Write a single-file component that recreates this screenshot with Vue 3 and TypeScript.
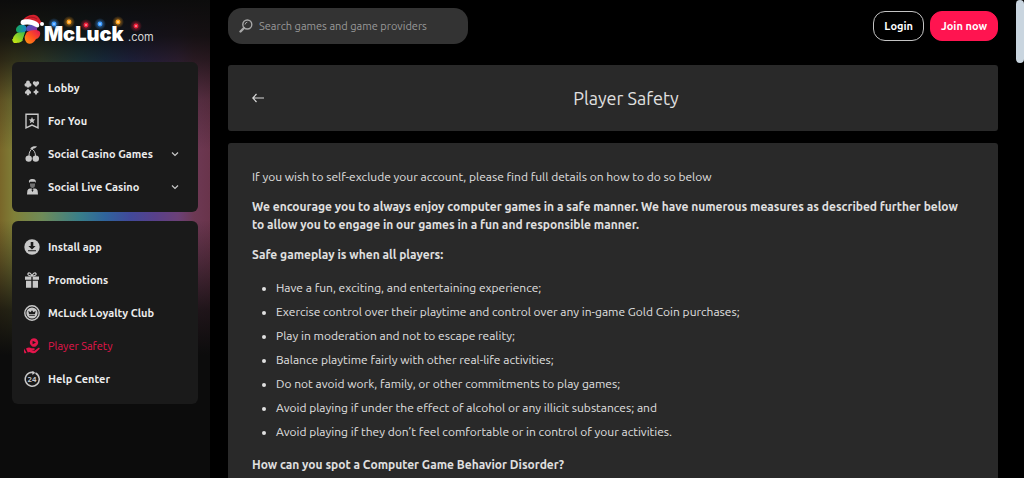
<script setup lang="ts">
import { ref } from 'vue'

interface NavItem {
  label: string
  icon: string
  expandable?: boolean
  active?: boolean
}

const groups: NavItem[][] = [
  [
    { label: 'Lobby', icon: 'suits' },
    { label: 'For You', icon: 'bookmark' },
    { label: 'Social Casino Games', icon: 'cherry', expandable: true },
    { label: 'Social Live Casino', icon: 'dealer', expandable: true },
  ],
  [
    { label: 'Install app', icon: 'install' },
    { label: 'Promotions', icon: 'gift' },
    { label: 'McLuck Loyalty Club', icon: 'loyalty' },
    { label: 'Player Safety', icon: 'safety', active: true },
    { label: 'Help Center', icon: 'help' },
  ],
]

const rules: string[] = [
  'Have a fun, exciting, and entertaining experience;',
  'Exercise control over their playtime and control over any in-game Gold Coin purchases;',
  'Play in moderation and not to escape reality;',
  'Balance playtime fairly with other real-life activities;',
  'Do not avoid work, family, or other commitments to play games;',
  'Avoid playing if under the effect of alcohol or any illicit substances; and',
  'Avoid playing if they don’t feel comfortable or in control of your activities.',
]

const bulbs = [
  { x: 42, y: 10, color: '#3d9bff' },
  { x: 57, y: 8, color: '#ffa31f' },
  { x: 74, y: 11, color: '#f0203c' },
  { x: 88, y: 10, color: '#3d9bff' },
  { x: 106, y: 8, color: '#ffa31f' },
  { x: 124, y: 12, color: '#f0203c' },
]

const query = ref('')
</script>

<template>
  <div class="page">
    <aside class="sidebar">
      <a class="logo" href="#" aria-label="McLuck.com">
        <svg width="144" height="32" viewBox="0 0 144 32">
          <defs>
            <linearGradient id="leafA" x1="0" y1="1" x2="1" y2="0">
              <stop offset="0" stop-color="#d8e80c" /><stop offset="1" stop-color="#35b84a" />
            </linearGradient>
            <linearGradient id="leafB" x1="0" y1="0" x2="1" y2="0">
              <stop offset="0" stop-color="#16a75a" /><stop offset="1" stop-color="#1784c9" />
            </linearGradient>
            <linearGradient id="leafC" x1="0" y1="0" x2="1" y2="1">
              <stop offset="0" stop-color="#3462c8" /><stop offset="1" stop-color="#a22a9a" />
            </linearGradient>
            <linearGradient id="leafD" x1="1" y1="0" x2="0" y2="1">
              <stop offset="0" stop-color="#df1556" /><stop offset="0.5" stop-color="#ff5020" /><stop offset="1" stop-color="#ff9a12" />
            </linearGradient>
            <radialGradient v-for="(b, i) in bulbs" :id="'glow' + i" :key="i">
              <stop offset="0" :stop-color="b.color" stop-opacity="0.7" />
              <stop offset="1" :stop-color="b.color" stop-opacity="0" />
            </radialGradient>
          </defs>
          <path d="M13 18C9 17 4 18 2 22C0 25 1 28 2 29C5 29 9 29 11 26C13 23 14 20 13 18Z" fill="url(#leafA)" />
          <path d="M1 25l1 3" stroke="#aee01a" stroke-width="2" />
          <path d="M14 18C10 18 4 20 4 16C4 12 8 10 12 11C15 12 15 15 14 18Z" fill="url(#leafB)" />
          <path d="M15 17C13 14 15 11 19 11C23 11 26 13 25 16C23 19 18 18 15 17Z" fill="url(#leafC)" />
          <path d="M15 18C19 16 26 15 28 18C29 22 26 25 24 25C22 29 18 31 15 29C12 26 12 22 15 18Z" fill="url(#leafD)" />
          <path d="M14 17l-3 9" stroke="#10140f" stroke-width="1" fill="none" />
          <path d="M10 8C12 3 18 0 23 1C27 2 28 6 30 9L26 11C20 7 16 8 10 8Z" fill="#d4202c" />
          <path d="M14 6C16 3 20 2 25 5" stroke="#a31420" stroke-width="1" fill="none" />
          <path d="M10 6C14 4 25 6 27 10C28 13 26 14 24 13C20 10 14 10 11 11C8 11 8 7 10 6Z" fill="#fff" />
          <circle cx="30" cy="10" r="2" fill="#fff" />
          <text x="32" y="27" class="logo-name">McLuck</text>
          <text x="116" y="27" class="logo-tld">.com</text>
          <g v-for="(b, i) in bulbs" :key="i">
            <circle :cx="b.x" :cy="b.y" r="6" :fill="'url(#glow' + i + ')'" />
            <circle :cx="b.x" :cy="b.y" r="2.4" :fill="b.color" />
            <circle :cx="b.x" :cy="b.y" r="1" fill="#fff" fill-opacity="0.5" />
          </g>
        </svg>
      </a>

      <nav v-for="(items, g) in groups" :key="g" class="card nav">
        <component
          :is="item.expandable ? 'button' : 'a'"
          v-for="item in items"
          :key="item.label"
          class="nav-item"
          :class="{ active: item.active }"
          :href="item.expandable ? undefined : '#'"
          :type="item.expandable ? 'button' : undefined"
        >
          <svg class="nav-icon" width="16" height="16" viewBox="0 0 16 16" fill="currentColor" aria-hidden="true">
            <g v-if="item.icon === 'suits'">
              <circle cx="4" cy="2.5" r="1.9" /><circle cx="2.4" cy="4.8" r="1.9" /><circle cx="5.6" cy="4.8" r="1.9" />
              <path d="M3.5 4h1l.8 3.400H2.7z" />
              <path d="M12 7L9.3 4.2C8.3 3 9 1.300 10.400 1.300C11.300 1.300 11.800 1.800 12 2.300C12.200 1.800 12.700 1.300 13.600 1.300C15 1.300 15.700 3 14.700 4.200Z" />
              <path d="M4 8.800L6.700 11.500C7.800 12.800 6.600 14.400 5 13.700L5.300 15.300H2.700L3 13.700C1.400 14.400.2 12.800 1.300 11.500Z" />
              <path d="M12 8.800Q12.900 11 15 12Q12.900 13 12 15.200Q11.100 13 9 12Q11.100 11 12 8.800Z" />
            </g>
            <g v-else-if="item.icon === 'bookmark'">
              <path d="M2 1.200H14V14.800L8 12L2 14.800Z" fill="none" stroke="currentColor" stroke-width="1.400" />
              <path d="M8 4L9 6.200L11.200 6.400L9.500 7.900L10.100 10.200L8 9L5.900 10.200L6.500 7.900L4.800 6.400L7 6.200Z" />
            </g>
            <g v-else-if="item.icon === 'cherry'">
              <circle cx="4.700" cy="12.600" r="3.200" /><circle cx="11.800" cy="12.600" r="3.200" />
              <path d="M5 10C5 6 6.500 3.500 9 2M11.500 10C11.500 6 9.500 4 8 3" fill="none" stroke="currentColor" />
              <path d="M6 2.800C8 .2 10.500.2 13 .5C11.500 2.500 9 3.300 6 2.800Z" />
            </g>
            <g v-else-if="item.icon === 'dealer'">
              <path d="M5.200 4C4.300 1 6 0 8.500 0C11.300 0 12.300 1.200 11.700 4L11 2.800H6Z" />
              <path d="M6 4.500H11V6C11 8 10 9 8.500 9S6 8 6 6Z" opacity=".5" />
              <path d="M3 15.500L3.400 11.500Q4 9.800 6.500 9.300L8.500 13L10.500 9.300Q13 9.800 13.600 11.500L14 15.500Z" />
              <path d="M7 9.300L8.500 10.200L10 9.300V11L8.500 10.300L7 11Z" />
            </g>
            <g v-else-if="item.icon === 'install'">
              <circle cx="8" cy="8" r="7.700" />
              <path d="M6.700 3H9.300V7H11.600L8 10.600L4.400 7H6.700ZM4 11.200H12V12.300H4Z" fill="#1a1a1a" />
            </g>
            <g v-else-if="item.icon === 'gift'">
              <path d="M1 4.500H7.300V7.700H1ZM8.700 4.500H15V7.700H8.700ZM2 8.700H7.300V15.700H2ZM8.700 8.700H14V15.700H8.700Z" />
              <path d="M8 4.200C6.500 4 3.200 3.400 4 1.600C5-.2 7.500 1.500 8 4.200C8.500 1.500 11-.2 12 1.600C12.800 3.400 9.500 4 8 4.200" fill="none" stroke="currentColor" stroke-width="1.200" />
            </g>
            <g v-else-if="item.icon === 'loyalty'">
              <circle cx="8" cy="8" r="7.200" fill="none" stroke="currentColor" stroke-width="1.400" />
              <circle cx="8" cy="8" r="5.600" />
              <path d="M4.300 5.800L6.500 7.300L8 5.200L9.500 7.300L11.700 5.800L11 9H5ZM5.200 9.800H10.800V10.700H5.200Z" fill="#1a1a1a" />
            </g>
            <g v-else-if="item.icon === 'safety'">
              <path fill-rule="evenodd" d="M10 .3A4.200 4.200 0 1 1 9.990.3ZM8.600 2.700V6.300L12 4.500Z" />
              <path d="M0 10.500L2.500 14.800L.8 15.500L0 14ZM2 10.500Q5 8.500 7.500 10.300H10Q11.300 10.700 10.300 11.900H7.500L10.500 12.700L14.500 9.800Q16.200 9.500 15.500 11L11.500 14.700Q10 15.500 8 15L5.500 14L3.800 14.500Z" />
            </g>
            <g v-else>
              <path d="M11.500 2A7 7 0 1 1 8 1.200L10 1.500" fill="none" stroke="currentColor" stroke-width="1.500" />
              <path d="M8.300 0L11.400 1.800L8.300 4Z" />
              <text x="8" y="11" class="icon-text">24</text>
            </g>
          </svg>
          <span>{{ item.label }}</span>
          <svg v-if="item.expandable" class="chevron" width="8" height="8" viewBox="0 0 8 8" aria-hidden="true">
            <path d="M1 2.500L4 5.500L7 2.500" fill="none" stroke="currentColor" stroke-width="1.200" />
          </svg>
        </component>
      </nav>
    </aside>

    <main class="main">
      <header class="topbar">
        <label class="search">
          <svg width="14" height="14" viewBox="0 0 14 14" fill="none" stroke="currentColor" aria-hidden="true">
            <circle cx="8.300" cy="5.500" r="4.500" stroke-width="1.400" />
            <path d="M5 9L1.500 12.500" stroke-width="2.400" stroke-linecap="round" />
            <path d="M6 5.500Q6.300 3.400 8.300 3.200" />
          </svg>
          <input v-model="query" type="search" aria-label="Search" placeholder="Search games and game providers" />
        </label>
        <div class="actions">
          <button class="btn" type="button">Login</button>
          <button class="btn primary" type="button">Join now</button>
        </div>
      </header>

      <section class="panel title-bar">
        <button class="back" type="button" aria-label="Back">
          <svg width="12" height="10" viewBox="0 0 12 10" fill="none" stroke="currentColor" stroke-width="1.200">
            <path d="M12 5H1M4.500 1L.8 5L4.500 9" />
          </svg>
        </button>
        <h1>Player Safety</h1>
      </section>

      <article class="panel content">
        <p>If you wish to self-exclude your account, please find full details on how to do so below</p>
        <p><strong>We encourage you to always enjoy computer games in a safe manner. We have numerous measures as described further below to allow you to engage in our games in a fun and responsible manner.</strong></p>
        <p><strong>Safe gameplay is when all players:</strong></p>
        <ul>
          <li v-for="rule in rules" :key="rule">{{ rule }}</li>
        </ul>
        <p><strong>How can you spot a Computer Game Behavior Disorder?</strong></p>
      </article>
    </main>
    <div class="scroll-thumb"></div>
  </div>
</template>

<style>
body {
  background: #000;
}
</style>

<style scoped>
* {
  box-sizing: border-box;
}
.page {
  position: relative;
  display: flex;
  height: 100vh;
  overflow: hidden;
  background: #000;
  color: #e0e0e0;
  font-family: Ubuntu, "Noto Sans", "Open Sans", sans-serif;
  font-size: 12px;
}
.sidebar {
  flex: 0 0 210px;
  display: flex;
  flex-direction: column;
  gap: 9px;
  padding: 14px 12px;
  background:
    linear-gradient(180deg, #0c0c0c 0, rgba(12, 12, 12, 0.9) 36px, rgba(12, 12, 12, 0.7) 60px, rgba(12, 12, 12, 0.25) 100px, transparent 150px, transparent 220px, rgba(12, 12, 12, 0.35) 262px, rgba(12, 12, 12, 0.8) 310px, #0c0c0c 355px),
    linear-gradient(90deg, #796629 0, #808038 14px, #6f8b58 42px, #387e8a 80px, #2f649c 105px, #41499a 130px, #58408a 155px, #6b4077 178px, #6d3954 194px, #69344b 210px);
}
.logo {
  height: 39px;
}
.logo svg {
  display: block;
  overflow: visible;
}
.logo-name {
  fill: #fff;
  font-family: Inter, sans-serif;
  font-size: 20px;
  font-weight: 900;
}
.logo-tld {
  fill: #d5d5d5;
  font-family: Inter, sans-serif;
  font-size: 11px;
}
.card {
  padding: 9px 12px;
  border-radius: 6px;
  background: #1a1a1a;
}
.nav-item {
  display: flex;
  align-items: center;
  gap: 8px;
  width: 100%;
  height: 33px;
  padding: 0;
  border: 0;
  background: none;
  color: #ececec;
  font-family: inherit;
  font-size: 11px;
  font-weight: 600;
  text-decoration: none;
  white-space: nowrap;
}
.nav-icon {
  flex: none;
  color: #c8c8c8;
}
.icon-text {
  font-size: 8px;
  font-weight: 700;
  text-anchor: middle;
}
.chevron {
  margin-left: auto;
  margin-right: 7px;
  color: #c8c8c8;
}
.active {
  font-weight: 400;
}
.active,
.active .nav-icon {
  color: #e4154b;
}
.main {
  flex: 1;
  min-width: 0;
  padding: 8px 26px 0 18px;
}
.topbar {
  display: flex;
  justify-content: space-between;
  align-items: center;
  margin-bottom: 21px;
}
.search {
  display: flex;
  align-items: center;
  gap: 6px;
  width: 240px;
  height: 36px;
  padding: 0 11px;
  border-radius: 14px;
  background: #333;
  color: #a8a8a8;
}
.search input {
  flex: 1;
  min-width: 0;
  padding: 0;
  border: 0;
  outline: 0;
  background: none;
  color: #e0e0e0;
  font-family: inherit;
  font-size: 11px;
}
.search input::placeholder {
  color: #999;
}
.actions {
  display: flex;
  gap: 6px;
}
.btn {
  height: 30px;
  padding: 0 10px;
  border: 1px solid #c4c4c4;
  border-radius: 12px;
  background: #000;
  color: #fff;
  font-family: inherit;
  font-size: 11px;
  font-weight: 600;
}
.primary {
  border-color: #ff1450;
  background: #ff1450;
}
.panel {
  border-radius: 3px;
  background: #292929;
}
.title-bar {
  display: grid;
  grid-template-columns: 12px 1fr;
  column-gap: 14px;
  align-items: center;
  height: 66px;
  margin-bottom: 12px;
  padding: 0 24px;
}
.back {
  display: flex;
  padding: 0;
  border: 0;
  background: none;
  color: #d8d8d8;
}
h1 {
  margin: 0;
  font-size: 18px;
  font-weight: 400;
  line-height: 24px;
  text-align: center;
}
.content {
  min-height: 100vh;
  padding: 25px 28px 25px 24px;
  line-height: 18px;
}
p {
  margin: 0 0 12px;
}
strong {
  font-weight: 700;
}
ul {
  margin: 0 0 12px;
  padding-left: 24px;
  line-height: 24px;
}
.scroll-thumb {
  position: absolute;
  top: 0;
  right: 0;
  width: 8px;
  height: 63px;
  border-radius: 4px;
  background: #c9d5df;
}
</style>
